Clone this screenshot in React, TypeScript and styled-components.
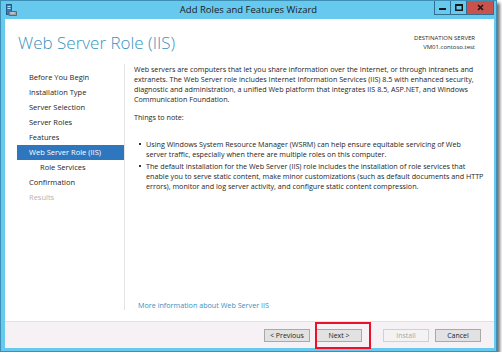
import React from 'react';
import styled, { createGlobalStyle } from 'styled-components';

const GlobalStyle = createGlobalStyle`
  html, body {
    margin: 0;
    padding: 0;
    background: #ffffff;
  }
  body {
    font-family: "Open Sans", "Noto Sans", sans-serif;
    color: #1e1e1e;
  }
`;

const Window = styled.div`
  position: relative;
  box-sizing: border-box;
  width: 497px;
  height: 352px;
  display: flex;
  flex-direction: column;
  background: #67c9ee;
  border: 1px solid #3e8fb5;
  box-shadow: 3px 3px 3px rgba(0, 0, 0, 0.55);
`;

const TitleBar = styled.div`
  display: grid;
  grid-template-columns: 1fr auto 1fr;
  align-items: start;
  height: 18px;
`;

const AppIcon = styled.div`
  padding: 3px 0 0 5px;
  line-height: 0;
`;

const Caption = styled.div`
  font-size: 9.5px;
  line-height: 18px;
  color: #1a1a1a;
`;

const Controls = styled.div`
  display: flex;
  justify-self: end;
  margin-right: 2px;
`;

const CtlButton = styled.div<{ $close?: boolean }>`
  box-sizing: border-box;
  width: ${p => (p.$close ? 28 : 17)}px;
  height: 14px;
  display: flex;
  align-items: center;
  justify-content: center;
  background: ${p => (p.$close ? '#c9524c' : 'transparent')};
  border: 1px solid #2f6f8f;
  border-top: none;
  margin-left: -1px;
`;

const Client = styled.div`
  flex: 1;
  display: flex;
  flex-direction: column;
  margin: 0 2px 3px 4px;
  background: #ffffff;
`;

const Header = styled.div`
  height: 45px;
  box-sizing: border-box;
  display: flex;
  justify-content: space-between;
  align-items: flex-start;
  padding: 14px 19px 0 13px;
`;

const PageTitle = styled.div`
  font-size: 17px;
  font-weight: 300;
  line-height: 20px;
  color: #3a92bd;
`;

const Destination = styled.div`
  padding-top: 1px;
  text-align: right;
  font-size: 6px;
  line-height: 9px;
  color: #2a2a2a;
`;

const Body = styled.div`
  flex: 1;
  display: flex;
`;

const Sidebar = styled.div`
  width: 107px;
  margin-left: 12px;
  padding-top: 6px;
  display: flex;
  flex-direction: column;
`;

const NavItem = styled.div<{ $active?: boolean; $sub?: boolean; $disabled?: boolean }>`
  height: 15px;
  line-height: 15px;
  font-size: 7.5px;
  white-space: nowrap;
  padding-left: ${p => (p.$sub ? 23 : 12)}px;
  background: ${p => (p.$active ? '#2e77bf' : 'transparent')};
  color: ${p => (p.$active ? '#ffffff' : p.$disabled ? '#b4b4b4' : '#1e1e1e')};
`;

const Content = styled.div`
  flex: 1;
  display: flex;
  flex-direction: column;
  border-left: 1px solid #e4e4e4;
  padding-left: 9px;
  margin-bottom: 11px;
  font-size: 7.2px;
  line-height: 10px;
`;

const Para = styled.div<{ $gap?: number }>`
  margin-top: ${p => p.$gap ?? 0}px;
  white-space: nowrap;
`;

const Bullet = styled.div<{ $gap: number }>`
  position: relative;
  margin-top: ${p => p.$gap}px;
  padding-left: 12px;
  white-space: nowrap;
  &::before {
    content: '';
    position: absolute;
    left: 5px;
    top: 4px;
    width: 2px;
    height: 2px;
    background: #333333;
  }
`;

const MoreLink = styled.a`
  margin-top: auto;
  padding-left: 4px;
  color: #3a8fc1;
  text-decoration: none;
  white-space: nowrap;
`;

const Footer = styled.div`
  height: 27px;
  box-sizing: border-box;
  display: flex;
  justify-content: flex-end;
  align-items: flex-start;
  padding: 7px 13px 0 0;
  background: #f5f1f5;
  border-top: 1px solid #e3dfe3;
`;

const Button = styled.div<{ $gap: number; $disabled?: boolean }>`
  box-sizing: border-box;
  width: 46px;
  height: 13px;
  margin-left: ${p => p.$gap}px;
  display: flex;
  align-items: center;
  justify-content: center;
  font-size: 7px;
  color: ${p => (p.$disabled ? '#a8a8a8' : '#1e1e1e')};
  background: ${p => (p.$disabled ? '#f3f3f3' : '#e2e2e2')};
  border: 1px solid ${p => (p.$disabled ? '#d0d0d0' : '#a9a9a9')};
`;

const Callout = styled.div`
  position: absolute;
  left: 314px;
  top: 321px;
  width: 56px;
  height: 27px;
  box-sizing: border-box;
  border: 2px solid #e8122c;
`;

const navItems = [
  { label: 'Before You Begin' },
  { label: 'Installation Type' },
  { label: 'Server Selection' },
  { label: 'Server Roles' },
  { label: 'Features' },
  { label: 'Web Server Role (IIS)', active: true },
  { label: 'Role Services', sub: true },
  { label: 'Confirmation' },
  { label: 'Results', disabled: true },
];

const intro = [
  'Web servers are computers that let you share information over the Internet, or through intranets and',
  'extranets. The Web Server role includes Internet Information Services (IIS) 8.5 with enhanced security,',
  'diagnostic and administration, a unified Web platform that integrates IIS 8.5, ASP.NET, and Windows',
  'Communication Foundation.',
];

const notes = [
  [
    'Using Windows System Resource Manager (WSRM) can help ensure equitable servicing of Web',
    'server traffic, especially when there are multiple roles on this computer.',
  ],
  [
    'The default installation for the Web Server (IIS) role includes the installation of role services that',
    'enable you to serve static content, make minor customizations (such as default documents and HTTP',
    'errors), monitor and log server activity, and configure static content compression.',
  ],
];

const ServerIcon = () => (
  <svg width="11" height="12" viewBox="0 0 11 12">
    <rect x="0.5" y="0.5" width="5" height="10" fill="#2f7fc0" stroke="#1d5d93" />
    <rect x="1.5" y="2" width="3" height="1" fill="#bfe3f7" />
    <rect x="1.5" y="4" width="3" height="1" fill="#bfe3f7" />
    <path d="M3 7.5 H10.5 V11.5 H3 Z" fill="#9aa3ab" stroke="#5e6870" />
    <rect x="4.5" y="8.5" width="4" height="1" fill="#e0e4e8" />
  </svg>
);

export default function App() {
  return (
    <>
      <GlobalStyle />
      <Window>
        <TitleBar>
          <AppIcon>
            <ServerIcon />
          </AppIcon>
          <Caption>Add Roles and Features Wizard</Caption>
          <Controls>
            <CtlButton>
              <svg width="7" height="7" viewBox="0 0 7 7">
                <rect x="0" y="4" width="7" height="2" fill="#1a1a1a" />
              </svg>
            </CtlButton>
            <CtlButton>
              <svg width="8" height="7" viewBox="0 0 8 7">
                <rect x="0.75" y="0.75" width="6.5" height="5.5" fill="none" stroke="#1a1a1a" strokeWidth="1.5" />
                <rect x="0" y="0" width="8" height="2" fill="#1a1a1a" />
              </svg>
            </CtlButton>
            <CtlButton $close>
              <svg width="7" height="7" viewBox="0 0 7 7">
                <path d="M1 1 L6 6 M6 1 L1 6" stroke="#1a1a1a" strokeWidth="1.6" />
              </svg>
            </CtlButton>
          </Controls>
        </TitleBar>

        <Client>
          <Header>
            <PageTitle>Web Server Role (IIS)</PageTitle>
            <Destination>
              <div>DESTINATION SERVER</div>
              <div>VM01.contoso.test</div>
            </Destination>
          </Header>

          <Body>
            <Sidebar>
              {navItems.map(item => (
                <NavItem
                  key={item.label}
                  $active={item.active}
                  $sub={item.sub}
                  $disabled={item.disabled}
                >
                  {item.label}
                </NavItem>
              ))}
            </Sidebar>

            <Content>
              <Para>
                {intro.map(line => (
                  <div key={line}>{line}</div>
                ))}
              </Para>
              <Para $gap={8}>Things to note:</Para>
              {notes.map((note, i) => (
                <Bullet key={i} $gap={i === 0 ? 17 : 2}>
                  {note.map(line => (
                    <div key={line}>{line}</div>
                  ))}
                </Bullet>
              ))}
              <MoreLink href="#">More information about Web Server IIS</MoreLink>
            </Content>
          </Body>

          <Footer>
            <Button $gap={0}>&lt; Previous</Button>
            <Button $gap={6}>Next &gt;</Button>
            <Button $gap={21} $disabled>
              Install
            </Button>
            <Button $gap={6}>Cancel</Button>
          </Footer>
        </Client>

        <Callout />
      </Window>
    </>
  );
}
